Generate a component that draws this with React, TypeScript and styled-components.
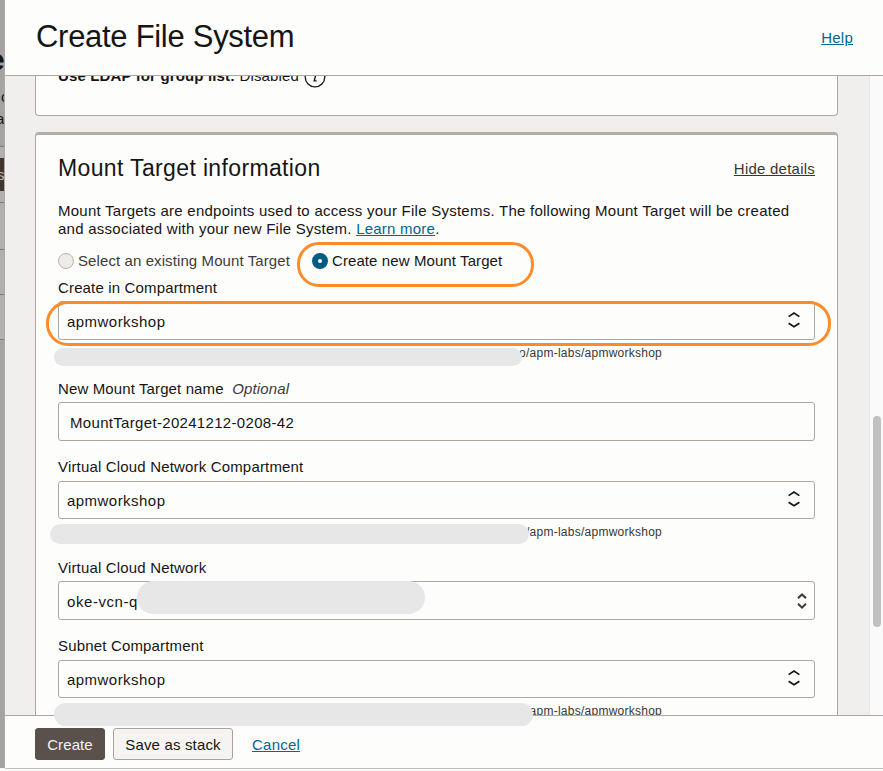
import React from "react";
import styled, { createGlobalStyle } from "styled-components";

const GlobalStyle = createGlobalStyle`
  * { box-sizing: border-box; }
  body {
    margin: 0;
    overflow: hidden;
    background: #fdfdfc;
    color: #161513;
    font: 15px/18px "Liberation Sans", Arial, sans-serif;
  }
`;

const line = "#aea7a0";

const Page = styled.div`
  position: relative;
  display: flex;
  width: 883px;
  height: 771px;
  overflow: hidden;
  background: #fdfdfc;
`;

const Backdrop = styled.div`
  display: flex;
  flex-direction: column;
  flex: none;
  width: 5px;
  height: 768px;
  overflow: hidden;
  background: #a5a3a2;
  border-right: 1px solid #b3a9a3;
`;

const BackdropText = styled.div<{ $height: number; $line: number; $size: number; $shift: number; $bold?: boolean }>`
  flex: none;
  height: ${(p) => p.$height}px;
  line-height: ${(p) => p.$line}px;
  font-size: ${(p) => p.$size}px;
  font-weight: ${(p) => (p.$bold ? 700 : 400)};
  text-indent: ${(p) => p.$shift}px;
  white-space: nowrap;
`;

const BackdropButton = styled.div`
  flex: none;
  height: 33px;
  margin: 11px 0;
  background: #40362f;
  color: #bdb8b4;
  line-height: 33px;
  text-indent: -3px;
`;

const BackdropRow = styled.div<{ $height: number }>`
  flex: none;
  height: ${(p) => p.$height}px;
  border-top: 1px solid #7d7a78;
  background: #b1b0ad;
`;

const Dialog = styled.div`
  display: flex;
  flex: 1;
  flex-direction: column;
  min-width: 0;
`;

const Header = styled.header`
  display: flex;
  flex: none;
  align-items: center;
  justify-content: space-between;
  height: 76px;
  padding: 0 30px 2px 31px;
  border-bottom: 1px solid ${line};
`;

const Title = styled.h1`
  margin: 0;
  font-size: 31px;
  line-height: 36px;
  font-weight: 400;
  letter-spacing: -0.29px;
`;

const Link = styled.a<{ $muted?: boolean; $top?: number }>`
  margin-top: ${(p) => p.$top ?? 0}px;
  color: ${(p) => (p.$muted ? "#3a3632" : "#00688c")};
  letter-spacing: 0.23px;
  text-decoration: underline;
  text-decoration-thickness: 1px;
  text-underline-offset: 1px;
`;

const Body = styled.main`
  display: flex;
  flex: none;
  height: 639px;
  overflow: hidden;
  background: #f1efee;
`;

const Content = styled.div`
  flex: 1;
  padding: 0 31px 0 30px;
`;

const ScrollTrack = styled.div`
  flex: none;
  width: 14px;
  padding: 340px 1px 0 3px;
  border-left: 1px solid #e6e5e5;
  background: #fafafa;
`;

const ScrollThumb = styled.div`
  width: 8px;
  height: 211px;
  border-radius: 4px;
  background: #c1c1c1;
`;

const ExportPanel = styled.section`
  display: flow-root;
  height: 40px;
  padding: 0 22px;
  border: 1px solid ${line};
  border-top: 0;
  border-radius: 0 0 4px 4px;
  background: #fdfdfc;
`;

const LdapLine = styled.div`
  display: flex;
  align-items: center;
  height: 24px;
  margin-top: -12px;
  letter-spacing: 0.12px;
  white-space: pre;
`;

const Strong = styled.b`
  letter-spacing: 0.14px;
`;

const InfoIcon = styled.svg`
  margin: 2px 0 0 5px;
`;

const Panel = styled.section`
  height: 700px;
  margin-top: 16px;
  padding: 18px 22px 0;
  border: 1px solid ${line};
  border-top: 3px solid #b4ada5;
  border-radius: 4px;
  background: #fdfdfc;
`;

const PanelHead = styled.div`
  display: flex;
  align-items: center;
  justify-content: space-between;
  height: 30px;
`;

const PanelTitle = styled.h2`
  margin: 0;
  font-size: 23px;
  font-weight: 400;
  letter-spacing: 0.36px;
`;

const Intro = styled.p`
  margin: 19px 0 0;
  letter-spacing: 0.25px;
  white-space: nowrap;
`;

const RadioRow = styled.div`
  display: flex;
  height: 18px;
  margin-top: 14px;
`;

const RadioOption = styled.div<{ $selected?: boolean }>`
  display: flex;
  align-items: center;
  gap: 4px;
  margin-right: ${(p) => (p.$selected ? 0 : 22)}px;
  color: ${(p) => (p.$selected ? "#161513" : "#3f3b38")};
  letter-spacing: 0.095px;
  white-space: nowrap;
`;

const RadioMark = styled.span<{ $selected?: boolean }>`
  flex: none;
  width: 16px;
  height: 16px;
  border-radius: 50%;
  border: ${(p) => (p.$selected ? "6px solid #005c80" : "1px solid #b9b2ac")};
  background: ${(p) => (p.$selected ? "#fff" : "#efebe9")};
`;

const Label = styled.div<{ $gap: number; $after?: number; $spacing?: number }>`
  height: 18px;
  margin: ${(p) => p.$gap}px 0 ${(p) => p.$after ?? 4}px;
  letter-spacing: ${(p) => p.$spacing ?? 0.17}px;
  white-space: pre;
`;

const Optional = styled.em`
  color: #3f3b38;
  letter-spacing: 0.13px;
`;

const Field = styled.div<{ $height: number; $inset?: number; $right?: number; $top?: number }>`
  display: flex;
  align-items: center;
  justify-content: space-between;
  height: ${(p) => p.$height}px;
  padding: ${(p) => p.$top ?? 2}px ${(p) => p.$right ?? 13}px 0 ${(p) => p.$inset ?? 8}px;
  border: 1px solid ${line};
  border-radius: 3px;
`;

const Value = styled.span<{ $spacing?: number }>`
  letter-spacing: ${(p) => p.$spacing ?? 0.46}px;
`;

const Chevrons = styled.svg<{ $lift: number }>`
  flex: none;
  margin-bottom: ${(p) => p.$lift}px;
`;

const Helper = styled.div`
  width: 604px;
  height: 14px;
  margin-top: 6px;
  color: #3a3632;
  font-size: 12px;
  line-height: 14px;
  letter-spacing: 0.25px;
  text-align: right;
  white-space: nowrap;
`;

const Footer = styled.footer`
  display: flex;
  flex: none;
  align-items: flex-start;
  height: 54px;
  padding: 12px 30px 0;
  border-top: 1px solid ${line};
  border-bottom: 1px solid #c2c1c1;
`;

const Button = styled.button<{ $primary?: boolean }>`
  width: ${(p) => (p.$primary ? 70 : 120)}px;
  height: 32px;
  margin: 0 8px 0 0;
  padding: 2px 0 0;
  border: 1px solid ${(p) => (p.$primary ? "#5a504c" : "#aaa29c")};
  border-radius: 3px;
  background: ${(p) => (p.$primary ? "#5a504c" : "#f6f4f2")};
  color: ${(p) => (p.$primary ? "#f4f2f1" : "#161513")};
  font: inherit;
  letter-spacing: ${(p) => (p.$primary ? 0.1 : 0.17)}px;
`;

const CancelLink = styled(Link)`
  margin: 8px 0 0 11px;
`;

const Mark = styled.div<{ $x: number; $y: number; $w: number; $h: number }>`
  position: absolute;
  left: ${(p) => p.$x}px;
  top: ${(p) => p.$y}px;
  width: ${(p) => p.$w}px;
  height: ${(p) => p.$h}px;
  border-radius: 22px;
`;

const Redaction = styled(Mark)`
  background: #e7e7e7;
`;

const Highlight = styled(Mark)`
  border: 3px solid #fd8b2a;
`;

function UpDown({ narrow }: { narrow?: boolean }) {
  return (
    <Chevrons
      $lift={narrow ? 1 : 4}
      width="14"
      height="18"
      viewBox="0 0 14 18"
      fill="none"
      stroke={narrow ? "#3f3b38" : "#161513"}
      strokeWidth={narrow ? 2 : 1.7}
    >
      {narrow ? (
        <path d="M3 6.2 7 2.4l4 3.8M3 11.8l4 3.8 4-3.8" />
      ) : (
        <path d="M1.6 5.6 7 2l5.4 3.6M1.6 12.2 7 15.8l5.4-3.6" />
      )}
    </Chevrons>
  );
}

export default function App() {
  return (
    <Page>
      <GlobalStyle />
      <Backdrop>
        <BackdropText $height={86} $line={119} $size={30} $shift={-12} $bold>e</BackdropText>
        <BackdropText $height={22} $line={22} $size={15} $shift={1}>c</BackdropText>
        <BackdropText $height={38} $line={22} $size={15} $shift={-4}>a</BackdropText>
        <BackdropRow $height={56}>
          <BackdropButton>s</BackdropButton>
        </BackdropRow>
        <BackdropRow $height={47} />
        <BackdropRow $height={45} />
        <BackdropRow $height={45} />
        <BackdropRow $height={1} />
      </Backdrop>
      <Dialog>
        <Header>
          <Title>Create File System</Title>
          <Link $top={2}>Help</Link>
        </Header>
        <Body>
          <Content>
            <ExportPanel>
              <LdapLine>
                <Strong>Use LDAP for group list:</Strong> Disabled
                <InfoIcon width="22" height="22" viewBox="0 0 22 22" fill="none" stroke="#161513">
                  <circle cx="11" cy="11" r="9.8" strokeWidth="1.3" />
                  <path d="M9.2 8.8h2.6l-1.6 6.1h2.4" strokeWidth="1.4" />
                  <circle cx="12.2" cy="6" r="0.7" fill="#161513" />
                </InfoIcon>
              </LdapLine>
            </ExportPanel>
            <Panel>
              <PanelHead>
                <PanelTitle>Mount Target information</PanelTitle>
                <Link $muted $top={2}>Hide details</Link>
              </PanelHead>
              <Intro>
                Mount Targets are endpoints used to access your File Systems. The following Mount Target will be created
                <br />
                and associated with your new File System. <Link>Learn more</Link>.
              </Intro>
              <RadioRow>
                <RadioOption>
                  <RadioMark />
                  Select an existing Mount Target
                </RadioOption>
                <RadioOption $selected>
                  <RadioMark $selected />
                  Create new Mount Target
                </RadioOption>
              </RadioRow>
              <Label $gap={9} $spacing={0.15}>Create in Compartment</Label>
              <Field $height={39} $top={3}>
                <Value>apmworkshop</Value>
                <UpDown />
              </Field>
              <Helper>o/apm-labs/apmworkshop</Helper>
              <Label $gap={20} $spacing={0.12}>
                New Mount Target name{"  "}
                <Optional>Optional</Optional>
              </Label>
              <Field $height={39} $inset={11}>
                <Value $spacing={0.32}>MountTarget-20241212-0208-42</Value>
              </Field>
              <Label $gap={17} $after={5}>Virtual Cloud Network Compartment</Label>
              <Field $height={38}>
                <Value>apmworkshop</Value>
                <UpDown />
              </Field>
              <Helper>/apm-labs/apmworkshop</Helper>
              <Label $gap={20}>Virtual Cloud Network</Label>
              <Field $height={39} $right={5}>
                <Value $spacing={0.57}>oke-vcn-q</Value>
                <UpDown narrow />
              </Field>
              <Label $gap={17} $after={5}>Subnet Compartment</Label>
              <Field $height={38}>
                <Value>apmworkshop</Value>
                <UpDown />
              </Field>
              <Helper>/apm-labs/apmworkshop</Helper>
            </Panel>
          </Content>
          <ScrollTrack>
            <ScrollThumb />
          </ScrollTrack>
        </Body>
        <Footer>
          <Button $primary>Create</Button>
          <Button>Save as stack</Button>
          <CancelLink>Cancel</CancelLink>
        </Footer>
      </Dialog>
      <Redaction $x={53.5} $y={347.5} $w={468} $h={18} />
      <Redaction $x={49.5} $y={523.5} $w={479} $h={20} />
      <Redaction $x={137} $y={580.5} $w={287.5} $h={33} />
      <Redaction $x={53.5} $y={703} $w={479} $h={22.5} />
      <Highlight $x={296.5} $y={242} $w={237} $h={45} />
      <Highlight $x={46} $y={301} $w={785} $h={45} />
    </Page>
  );
}
